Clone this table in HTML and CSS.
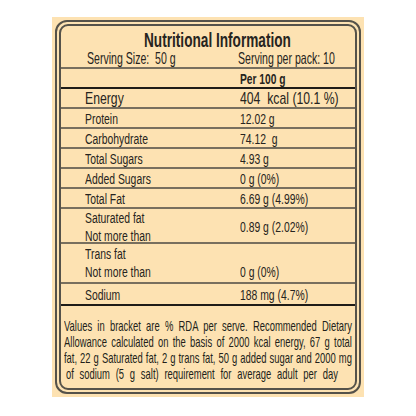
FILE: index.html
```html
<!DOCTYPE html>
<html lang="en">
<head>
    <meta charset="UTF-8">
    <meta name="viewport" content="width=device-width, initial-scale=1.0">
    <title>Nutritional Information</title>
    <link rel="stylesheet" href="styles.css">
</head>
<body>
    <div class="panel">
        <div class="frame-outer">
            <div class="frame-inner">
                <h1 class="title"><span>Nutritional Information</span></h1>

                <div class="row serving">
                    <span class="label">Serving Size:&nbsp; 50 g</span>
                    <span class="value">Serving per pack: 10</span>
                </div>

                <div class="row head thick">
                    <span class="label"></span>
                    <span class="value">Per 100 g</span>
                </div>

                <div class="row energy">
                    <span class="label">Energy</span>
                    <span class="value">404&nbsp; kcal (10.1 %)</span>
                </div>
                <div class="row">
                    <span class="label">Protein</span>
                    <span class="value">12.02 g</span>
                </div>
                <div class="row">
                    <span class="label">Carbohydrate</span>
                    <span class="value">74.12&nbsp; g</span>
                </div>
                <div class="row">
                    <span class="label">Total Sugars</span>
                    <span class="value">4.93 g</span>
                </div>
                <div class="row">
                    <span class="label">Added Sugars</span>
                    <span class="value">0 g (0%)</span>
                </div>
                <div class="row">
                    <span class="label">Total Fat</span>
                    <span class="value">6.69 g (4.99%)</span>
                </div>
                <div class="row two-line sat">
                    <span class="label">Saturated fat<br>Not more than</span>
                    <span class="value">0.89 g (2.02%)</span>
                </div>
                <div class="row two-line trans">
                    <span class="label">Trans fat<br>Not more than</span>
                    <span class="value">0 g (0%)</span>
                </div>
                <div class="row sodium thick">
                    <span class="label">Sodium</span>
                    <span class="value">188 mg (4.7%)</span>
                </div>

                <div class="note">
                    <div class="note-text">
                        <span class="line">Values in bracket are % RDA per serve. Recommended Dietary</span>
                        <span class="line">Allowance calculated on the basis of 2000 kcal energy, 67 g total</span>
                        <span class="line">fat, 22 g Saturated fat, 2 g trans fat, 50 g added sugar and 2000 mg</span>
                        <span class="line last">of sodium (5 g salt) requirement for average adult per day</span>
                    </div>
                </div>
            </div>
        </div>
    </div>
</body>
</html>
```

FILE: styles.css
```css
* {
    box-sizing: border-box;
    margin: 0;
    padding: 0;
}

body {
    background-color: white;
    font-family: 'Liberation Sans', Arial, sans-serif;
    color: #262420;
    overflow: hidden;
}

.panel {
    width: 312px;
    height: 380px;
    margin: 17px 0 0 52px;
    padding: 3px;
    background-color: #fde2b2;
}

.frame-outer {
    height: 100%;
    padding: 2px;
    border: 2px solid #55524a;
    border-radius: 12px;
}

.frame-inner {
    height: 100%;
    border: 2px solid #55524a;
    border-radius: 9px;
}

.title {
    display: flex;
    justify-content: center;
    padding: 4px 0 0 18px;
    font-size: 20.5px;
    line-height: 20px;
    font-weight: bold;
    white-space: nowrap;
}

.title span {
    transform: scaleX(0.665);
}

.row {
    display: grid;
    grid-template-columns: 179px 1fr;
    align-items: center;
    height: 20px;
    border-bottom: 2px solid #786f5e;
    font-size: 15.5px;
    line-height: 17px;
}

.row .label,
.row .value {
    white-space: nowrap;
    transform: scaleX(0.67);
    transform-origin: left center;
}

.row .label {
    margin-left: 24px;
}

.row.thick {
    border-bottom-color: #1e1c18;
}

.serving {
    height: 19px;
    font-size: 16.5px;
    grid-template-columns: 177px 1fr;
}

.serving .label {
    margin-left: 26px;
}

.serving .label,
.serving .value {
    transform: scaleX(0.64);
}

.head {
    font-weight: bold;
    font-size: 15.5px;
}

.head .value {
    transform: scaleX(0.66);
}

.energy {
    font-size: 17px;
}

.energy .label,
.energy .value {
    transform: scaleX(0.72);
}

.two-line {
    line-height: 18px;
}

.sat {
    height: 35px;
}

.trans {
    height: 40px;
}

.trans .value {
    padding-top: 17px;
}

.sodium {
    height: 22px;
}

.note {
    padding: 12px 0 0 3px;
    overflow: hidden;
}

.note-text {
    width: 452px;
    font-size: 14.8px;
    line-height: 16px;
    color: #221f1a;
    transform: scaleX(0.637);
    transform-origin: left top;
}

.note-text .line {
    display: block;
    white-space: nowrap;
    text-align: justify;
    text-align-last: justify;
}

.note-text .last {
    padding: 0 22px 0 3px;
}
```
